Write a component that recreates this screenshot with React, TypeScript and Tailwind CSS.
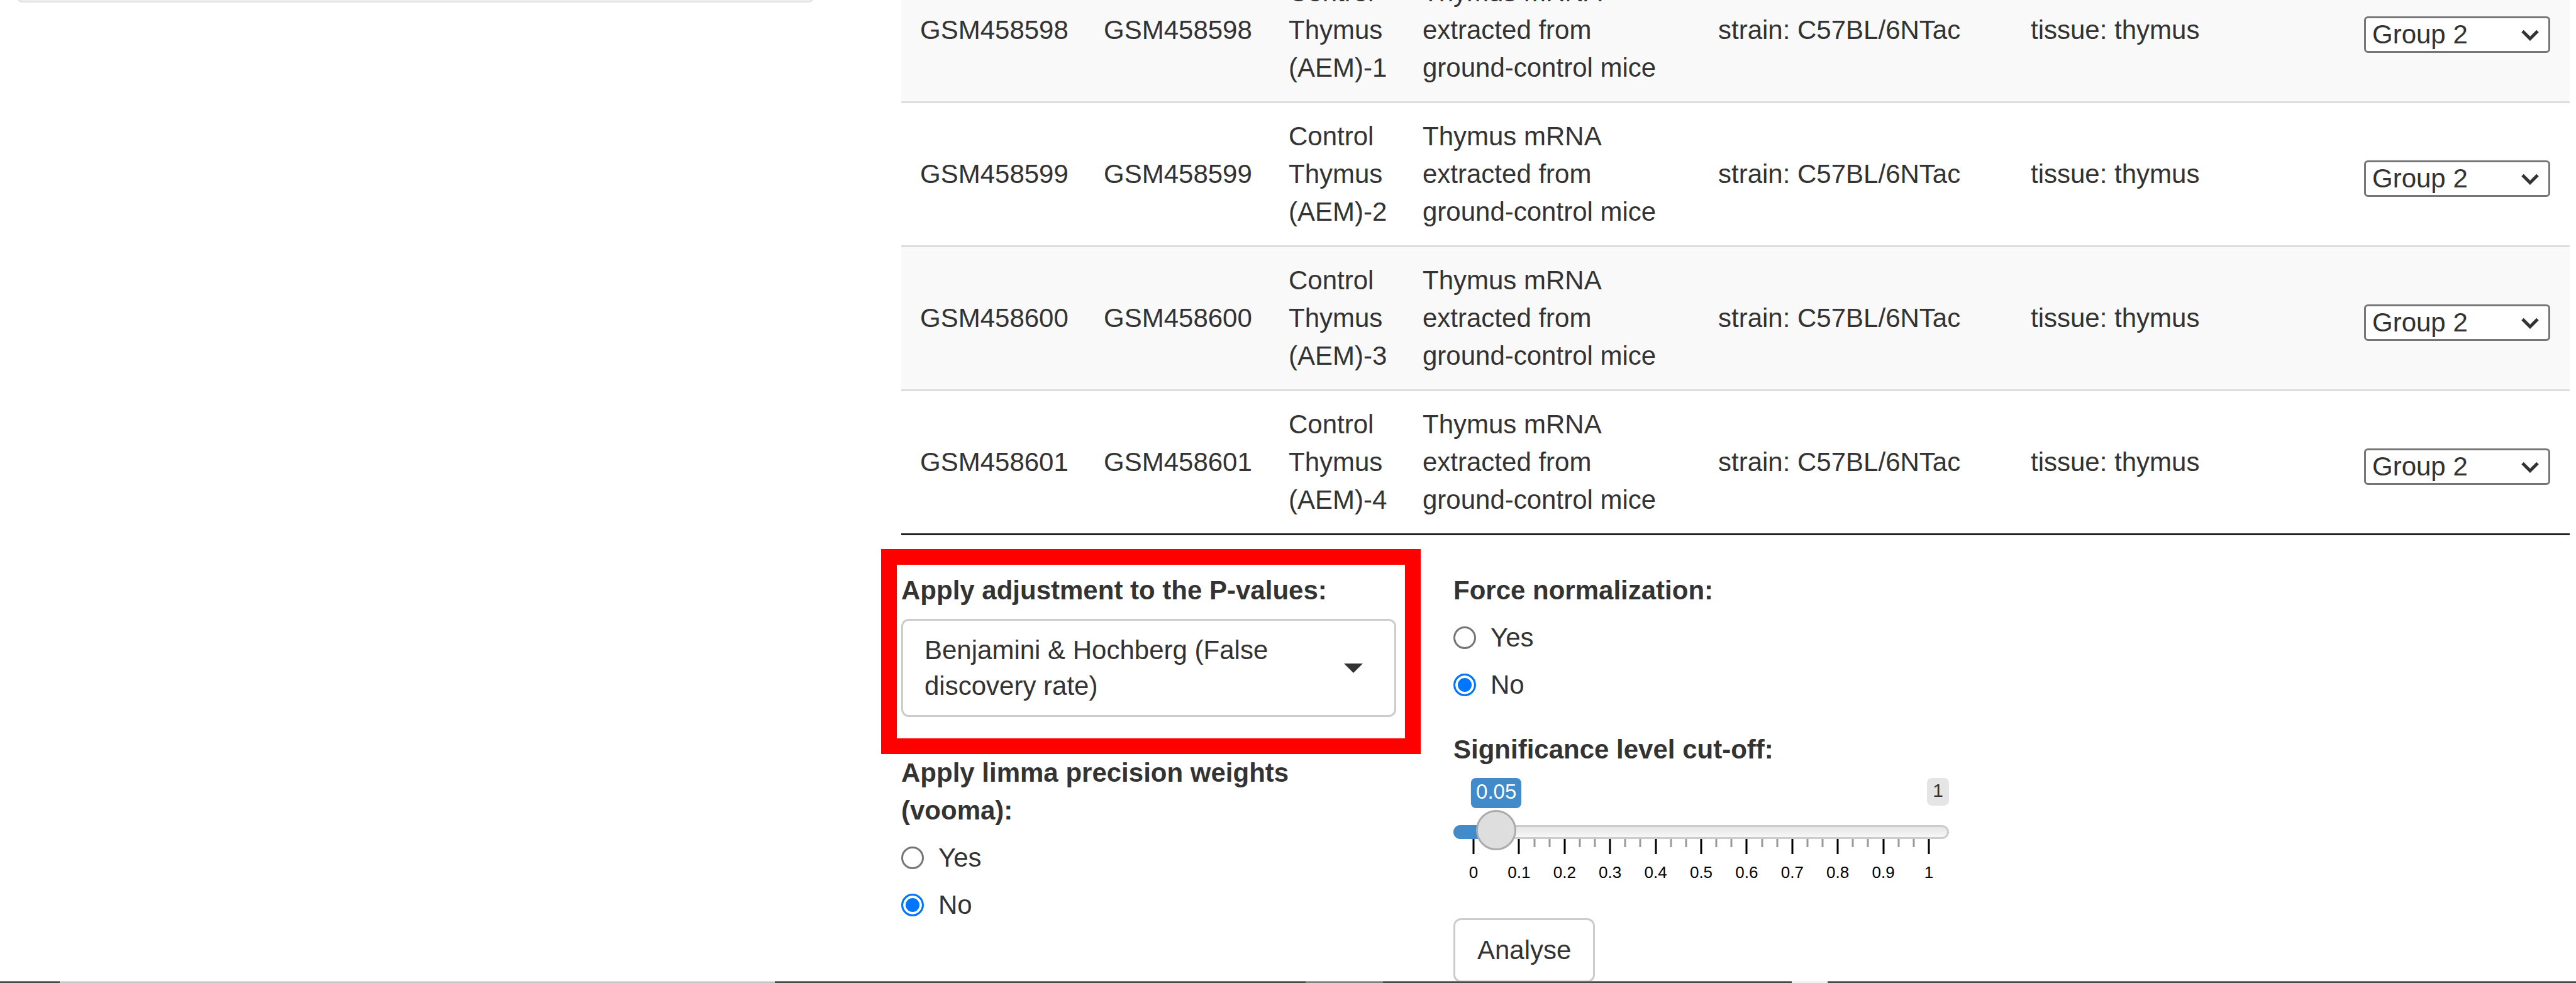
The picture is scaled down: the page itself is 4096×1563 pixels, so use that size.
import { useState } from "react";

const samples = [
  { id: "GSM458598", n: 1 },
  { id: "GSM458599", n: 2 },
  { id: "GSM458600", n: 3 },
  { id: "GSM458601", n: 4 },
];

const adjustments = [
  "Benjamini & Hochberg (False discovery rate)",
  "Benjamini & Yekutieli",
  "Bonferroni",
  "Holm",
  "None",
];

function GroupSelect({ sample }: { sample: string }) {
  return (
    <div className="relative mt-[14px] w-[296px]">
      <select
        aria-label={`Group for ${sample}`}
        defaultValue="Group 2"
        className="block h-[58px] w-full appearance-none rounded-md border-[3px] border-[#767676] bg-white pl-[10px] leading-[52px] text-[#333]"
      >
        <option>Group 1</option>
        <option>Group 2</option>
      </select>
      <svg
        viewBox="0 0 30 18"
        className="pointer-events-none absolute top-[21px] right-[17px] h-[18px] w-[30px]"
        fill="none"
        stroke="#333"
        strokeWidth="5"
      >
        <path d="M3 2.5 15 14.5 27 2.5" />
      </svg>
    </div>
  );
}

function SampleTable() {
  return (
    <table className="-mt-[68px] w-full table-fixed border-separate border-spacing-0 border-b-[3px] border-[#222] text-left">
      <colgroup>
        <col className="w-[292px]" />
        <col className="w-[294px]" />
        <col className="w-[213px]" />
        <col className="w-[470px]" />
        <col className="w-[497px]" />
        <col />
        <col className="w-[357px]" />
      </colgroup>
      <tbody className="[&_td]:border-t-[3px] [&_td]:border-[#ddd] [&_td]:py-[23px] [&_td]:pr-[26px] [&_td]:pl-[30px] [&_td]:align-middle">
        {samples.map((s) => (
          <tr key={s.id} className="odd:bg-[#f9f9f9]">
            <td>{s.id}</td>
            <td>{s.id}</td>
            <td>{`Control Thymus (AEM)-${s.n}`}</td>
            <td>Thymus mRNA extracted from ground-control mice</td>
            <td>strain: C57BL/6NTac</td>
            <td>tissue: thymus</td>
            <td>
              <GroupSelect sample={s.id} />
            </td>
          </tr>
        ))}
      </tbody>
    </table>
  );
}

function AdjustmentField() {
  const [value, setValue] = useState(adjustments[0]);
  return (
    <div className="relative mb-[59px]">
      <div className="pointer-events-none absolute -top-[36px] -right-[39px] -bottom-[59px] -left-[32px] border-[25px] border-[#ff0000]" />
      <label htmlFor="adjustment" className="mb-[15px] block font-bold">
        Apply adjustment to the P-values:
      </label>
      <div className="relative flex items-center justify-between rounded-xl border-[3px] border-[#ccc] bg-white py-[18px] pr-[50px] pl-[34px] leading-[57px]">
        <span aria-hidden="true" className="w-[580px]">
          {value}
        </span>
        <svg viewBox="0 0 30 15" className="h-[15px] w-[30px]" fill="#333">
          <path d="M0 0h30L15 15z" />
        </svg>
        <select
          id="adjustment"
          value={value}
          onChange={(e) => setValue(e.target.value)}
          className="absolute inset-0 h-full w-full cursor-pointer opacity-0"
        >
          {adjustments.map((a) => (
            <option key={a}>{a}</option>
          ))}
        </select>
      </div>
    </div>
  );
}

function YesNo({ legend, name }: { legend: string; name: string }) {
  return (
    <fieldset>
      <legend className="mb-[15px] font-bold">{legend}</legend>
      <div className="flex flex-col items-start gap-[15px]">
        {["Yes", "No"].map((option) => (
          <label key={option} className="flex items-center gap-[23px]">
            <input
              type="radio"
              name={name}
              value={option}
              defaultChecked={option === "No"}
              className="h-9 w-9 appearance-none rounded-full border-[3px] border-[#767676] bg-white checked:border-[#0075ff] checked:bg-[#0075ff] checked:shadow-[inset_0_0_0_4px_#fff]"
            />
            {option}
          </label>
        ))}
      </div>
    </fieldset>
  );
}

const ticks = Array.from({ length: 31 }, (_, i) => i);

function CutoffSlider() {
  const [value, setValue] = useState(0.05);
  const percent = `${value * 100}%`;
  return (
    <div className="mt-[43px] mb-[58px]">
      <label htmlFor="cutoff" className="mb-[15px] block font-bold">
        Significance level cut-off:
      </label>
      <div className="relative h-[165px]">
        <span className="absolute top-0 right-0 rounded-lg bg-[#e5e5e5] px-[9px] pb-1 text-[30px] leading-[40px]">
          1
        </span>
        <div className="absolute inset-x-0 top-[75px] h-[22px] overflow-hidden rounded-[11px] border-[3px] border-[#ccc] bg-linear-to-b from-[#e6e6e6] to-[#f7f7f7]" />
        <div className="absolute inset-x-0 top-0 mx-8">
          <div
            className="absolute top-[75px] -left-8 h-[22px] rounded-l-[11px] bg-[#428bca]"
            style={{ width: `calc(${percent} + 32px)` }}
          />
          {ticks.map((i) => (
            <span
              key={i}
              className={
                i % 3 === 0
                  ? "absolute top-[97px] h-6 w-[3px] -translate-x-1/2 bg-black"
                  : "absolute top-[97px] h-[13px] w-[3px] -translate-x-1/2 bg-[#999]"
              }
              style={{ left: `${(i * 100) / 30}%` }}
            />
          ))}
          {ticks
            .filter((i) => i % 3 === 0)
            .map((i) => (
              <span
                key={i}
                className="absolute top-[135px] -translate-x-1/2 text-[26px] leading-[30px] text-black"
                style={{ left: `${(i * 100) / 30}%` }}
              >
                {i / 30}
              </span>
            ))}
          <span
            className="absolute top-0 -translate-x-1/2 rounded-lg bg-[#428bca] px-2 pb-1 text-[33px] leading-[44px] text-white"
            style={{ left: percent }}
          >
            {value}
          </span>
          <span
            className="absolute top-[51px] h-16 w-16 -translate-x-1/2 rounded-full border-[3px] border-[#ababab] bg-[#dedede]"
            style={{ left: percent }}
          />
        </div>
        <input
          id="cutoff"
          type="range"
          min="0"
          max="1"
          step="0.01"
          value={value}
          onChange={(e) => setValue(Number(e.target.value))}
          className="absolute inset-x-0 top-[51px] h-16 w-full cursor-pointer opacity-0"
        />
      </div>
    </div>
  );
}

export default function App() {
  return (
    <div className="relative h-screen overflow-hidden bg-white font-['Liberation_Sans',Arial,sans-serif] text-[42px] leading-[60px] text-[#333]">
      <div className="grid grid-cols-[1267fr_2653fr] items-start gap-x-[139px] pr-[10px] pl-[27px]">
        <aside className="-mt-[56px] h-[60px] rounded-lg border-[3px] border-[#e3e3e3] bg-[#f5f5f5]" />
        <main className="min-w-0">
          <SampleTable />
          <form
            onSubmit={(e) => e.preventDefault()}
            className="mt-[58px] grid grid-cols-[787fr_788fr_896fr] items-start gap-x-[91px]"
          >
            <div className="min-w-0">
              <AdjustmentField />
              <YesNo legend="Apply limma precision weights (vooma):" name="vooma" />
            </div>
            <div className="min-w-0">
              <YesNo legend="Force normalization:" name="normalization" />
              <CutoffSlider />
              <button
                type="submit"
                className="rounded-xl border-[3px] border-[#ccc] bg-white px-[35px] py-[18px]"
              >
                Analyse
              </button>
            </div>
          </form>
        </main>
      </div>
      <div className="absolute inset-x-0 bottom-0 grid h-[3px] grid-cols-[95fr_1137fr_844fr_123fr_650fr_57fr_1190fr]">
        <div className="bg-linear-to-b from-[#8a8784] to-[#37312c]" />
        <div className="bg-linear-to-b from-[#e6e6e6] to-[#bababa]" />
        <div className="bg-linear-to-b from-[#8a8784] to-[#37342c]" />
        <div className="bg-linear-to-b from-[#aaaaa8] to-[#73736e]" />
        <div className="bg-linear-to-b from-[#8a8784] to-[#33322c]" />
        <div className="bg-[#f3f3f3]" />
        <div className="bg-linear-to-b from-[#868686] to-[#333333]" />
      </div>
    </div>
  );
}
